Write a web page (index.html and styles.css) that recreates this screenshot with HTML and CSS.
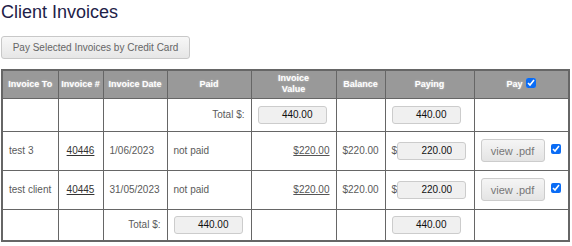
FILE: index.html
```html
<!DOCTYPE html>
<html>
<head>
<meta charset="utf-8">
<link rel="stylesheet" href="styles.css">
</head>
<body>
<h1 class="title">Client Invoices</h1>
<button class="btn-pay">Pay Selected Invoices by Credit Card</button>
<table class="inv">
  <colgroup>
    <col class="c1"><col class="c2"><col class="c3"><col class="c4"><col class="c5"><col class="c6"><col class="c7"><col class="c8">
  </colgroup>
  <thead>
    <tr class="head">
      <th>Invoice To</th>
      <th>Invoice #</th>
      <th>Invoice Date</th>
      <th>Paid</th>
      <th>Invoice<br>Value</th>
      <th>Balance</th>
      <th>Paying</th>
      <th>Pay <input type="checkbox" class="chk head-chk" checked></th>
    </tr>
  </thead>
  <tbody>
    <tr class="total-top">
      <td></td><td></td><td></td>
      <td class="right">Total $:</td>
      <td><input class="amt" type="text" value="440.00"></td>
      <td></td>
      <td><input class="amt" type="text" value="440.00"></td>
      <td></td>
    </tr>
    <tr class="row">
      <td>test 3</td>
      <td class="center"><a class="link num" href="#">40446</a></td>
      <td>1/06/2023</td>
      <td>not paid</td>
      <td class="right"><a class="link" href="#">$220.00</a></td>
      <td>$220.00</td>
      <td class="paying">$<input class="amt" type="text" value="220.00"></td>
      <td class="pay"><button class="btn-pdf">view .pdf</button><input type="checkbox" class="chk" checked></td>
    </tr>
    <tr class="row">
      <td>test client</td>
      <td class="center"><a class="link num" href="#">40445</a></td>
      <td>31/05/2023</td>
      <td>not paid</td>
      <td class="right"><a class="link" href="#">$220.00</a></td>
      <td>$220.00</td>
      <td class="paying">$<input class="amt" type="text" value="220.00"></td>
      <td class="pay"><button class="btn-pdf">view .pdf</button><input type="checkbox" class="chk" checked></td>
    </tr>
    <tr class="total-bottom">
      <td></td><td></td>
      <td class="right">Total $:</td>
      <td><input class="amt" type="text" value="440.00"></td>
      <td></td><td></td>
      <td><input class="amt" type="text" value="440.00"></td>
      <td></td>
    </tr>
  </tbody>
</table>
</body>
</html>
```

FILE: styles.css
```css
html, body {
  margin: 0;
  padding: 0;
  background: #fff;
}
body {
  padding: 2px 1px;
  font-family: "Liberation Sans", Arial, sans-serif;
  font-size: 10px;
  color: #5a5a5a;
}
.title {
  margin: 0;
  font-size: 18px;
  font-weight: normal;
  color: #1e2148;
  line-height: 21px;
}
.btn-pay {
  display: block;
  margin-top: 13px;
  width: 189px;
  height: 23px;
  padding: 0 10px;
  box-sizing: border-box;
  font-family: "Liberation Sans", Arial, sans-serif;
  font-size: 10px;
  color: #666;
  background: linear-gradient(#f7f7f7, #e6e6e6);
  border: 1px solid #c8c8c8;
  border-radius: 3px;
}
.inv {
  margin-top: 10px;
  border-collapse: collapse;
  table-layout: fixed;
  width: 568px;
  border: 2px solid #666;
}
.c1 { width: 56px; }
.c2 { width: 45px; }
.c3 { width: 64px; }
.c4 { width: 84px; }
.c5 { width: 85px; }
.c6 { width: 49px; }
.c7 { width: 89px; }
.c8 { width: 95px; }
.inv th, .inv td {
  border: 1px solid #666;
  padding: 0 6px;
  white-space: nowrap;
}
.inv th {
  background: #999;
  color: #fff;
  font-size: 9px;
  font-weight: bold;
  text-align: center;
  line-height: 11px;
  text-shadow: 0 0 2px rgba(255,255,255,0.6);
  padding: 0 2px;
}
.head { height: 28px; }
.total-top { height: 33px; }
.row { height: 39px; }
.total-bottom { height: 32px; }
.right { text-align: right; }
.center { text-align: center; }
.link {
  color: #555;
  text-decoration: underline;
}
.link.num {
  color: #333;
}
.amt {
  width: 69px;
  height: 18px;
  box-sizing: border-box;
  border: 1px solid #ccc;
  border-radius: 3px;
  background: #f0f0f0;
  font-family: "Liberation Sans", Arial, sans-serif;
  font-size: 10px;
  color: #111;
  text-align: right;
  padding: 0 13px 0 0;
  vertical-align: middle;
}
.pay {
  padding: 0 0 0 8px;
}
.btn-pdf {
  width: 64px;
  height: 23px;
  box-sizing: border-box;
  font-family: "Liberation Sans", Arial, sans-serif;
  font-size: 11px;
  color: #777;
  background: linear-gradient(#f5f5f5, #e4e4e4);
  border: 1px solid #ccc;
  border-radius: 3px;
  vertical-align: middle;
  padding: 0;
}
.chk {
  width: 10px;
  height: 10px;
  margin: 0 0 0 6px;
  vertical-align: middle;
  accent-color: #0a6cf5;
}
.head-chk {
  margin-left: 1px;
  position: relative;
  top: -1px;
}
.pay .chk {
  position: relative;
  top: -2px;
}
```
